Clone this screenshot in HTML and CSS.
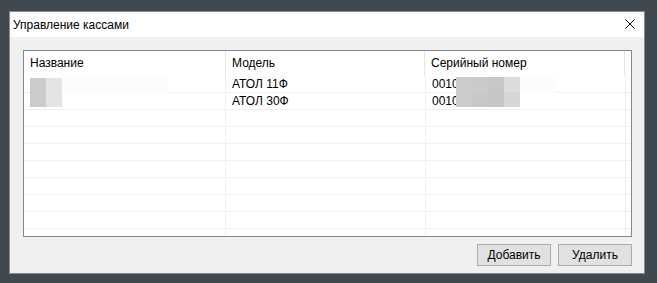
FILE: index.html
```html
<!DOCTYPE html>
<html lang="ru">
<head>
  <meta charset="UTF-8">
  <title>Управление кассами</title>
  <link rel="stylesheet" href="styles.css">
</head>
<body>

  <div class="window">
    <div class="titlebar">
      <span class="title">Управление кассами</span>
      <svg class="close" width="10" height="10" viewBox="0 0 10 10">
        <path d="M0.5 0.5 L9.5 9.5 M9.5 0.5 L0.5 9.5" stroke="#000" stroke-width="1" fill="none"/>
      </svg>
    </div>

    <div class="content">
      <div class="listview">
        <div class="header">
          <div class="hcell">Название</div>
          <div class="hcell">Модель</div>
          <div class="hcell">Серийный номер</div>
          <div class="hfill"></div>
        </div>
        <div class="rows" id="rows"></div>

        <!-- размытые данные -->
        <div class="blur name-blur">
          <div class="px" style="background:#cccacc"></div>
          <div class="px" style="background:#e4e4e6"></div>
        </div>
        <div class="blur name-faint"></div>
        <div class="blur serial-blur">
          <div class="px" style="background:#cecbcc"></div>
          <div class="px" style="background:#cacaca"></div>
          <div class="px" style="background:#c7c7c7"></div>
          <div class="px" style="background:#dcdcde"></div>
          <div class="px" style="background:#cfcbcc"></div>
          <div class="px" style="background:#c8c8c8"></div>
          <div class="px" style="background:#c6c6c6"></div>
          <div class="px" style="background:#d6d6d6"></div>
        </div>
        <div class="blur serial-faint"></div>
      </div>

      <div class="buttons">
        <button>Добавить</button>
        <button>Удалить</button>
      </div>
    </div>
  </div>

  <script>
    const data = [
      ['', 'АТОЛ 11Ф', '0010'],
      ['', 'АТОЛ 30Ф', '0010']
    ];
    const rows = document.getElementById('rows');
    for (let i = 0; i < 10; i++) {
      const row = document.createElement('div');
      row.classList.add('row');
      const item = data[i] || ['', '', ''];
      item.forEach(text => {
        const cell = document.createElement('div');
        cell.classList.add('cell');
        cell.textContent = text;
        row.appendChild(cell);
      });
      const fill = document.createElement('div');
      fill.classList.add('fill');
      row.appendChild(fill);
      rows.appendChild(row);
    }
  </script>

</body>
</html>
```

FILE: styles.css
```css
body {
  margin: 0;
  padding: 11px 0 0 9px;
  height: 283px;
  box-sizing: border-box;
  overflow: hidden;
  background-color: #40494f;
  font-family: 'Liberation Sans', Arial, sans-serif;
  font-size: 12px;
  color: #000;
}

.window {
  width: 634px;
  height: 261px;
  border: 1px solid #8a8a8a;
  background-color: #f0f0f0;
}

.titlebar {
  height: 25px;
  background-color: #fff;
  display: flex;
  align-items: center;
  justify-content: space-between;
  padding: 0 9px 0 3px;
}

.title {
  font-size: 12px;
}

.close {
  display: block;
  margin-top: -1px;
}

.content {
  padding: 13px 12px 7px 13px;
}

.listview {
  position: relative;
  height: 185px;
  border: 1px solid #828790;
  background-color: #fff;
  overflow: hidden;
}

.header {
  display: flex;
  height: 25px;
}

.hcell {
  width: 199px;
  padding-left: 6px;
  border-right: 1px solid #e5e5e5;
  line-height: 24px;
  white-space: nowrap;
  box-sizing: content-box;
}

.hcell:first-child {
  width: 195px;
}

.hcell:nth-child(2) {
  width: 192px;
}

.hcell:nth-child(3) {
  width: 193px;
}

.hfill {
  flex: 1;
}

.row {
  display: flex;
  height: 16px;
  border-bottom: 1px solid #f0f0f0;
}

.cell {
  padding-left: 6px;
  border-right: 1px solid #f0f0f0;
  line-height: 16px;
  white-space: nowrap;
}

.cell:nth-child(1) {
  width: 195px;
}

.cell:nth-child(2),
.cell:nth-child(3) {
  width: 193px;
}

.fill {
  flex: 1;
}

.blur {
  position: absolute;
}

.name-blur {
  left: 6px;
  top: 27px;
  width: 32px;
  height: 29px;
  display: grid;
  grid-template-columns: 16px 16px;
}

.name-faint {
  left: 38px;
  top: 27px;
  width: 106px;
  height: 16px;
  background-color: #fcfcfc;
}

.serial-blur {
  left: 432px;
  top: 26px;
  width: 64px;
  height: 30px;
  display: grid;
  grid-template-columns: repeat(4, 16px);
  grid-template-rows: 15px 15px;
}

.serial-faint {
  left: 496px;
  top: 26px;
  width: 35px;
  height: 16px;
  background-color: #fcfcfc;
}

.buttons {
  display: flex;
  justify-content: flex-end;
  gap: 7px;
  margin-top: 7px;
}

button {
  width: 74px;
  height: 22px;
  padding: 0;
  font-family: inherit;
  font-size: 12px;
  color: #000;
  background-color: #e1e1e1;
  border: 1px solid #adadad;
}
```
